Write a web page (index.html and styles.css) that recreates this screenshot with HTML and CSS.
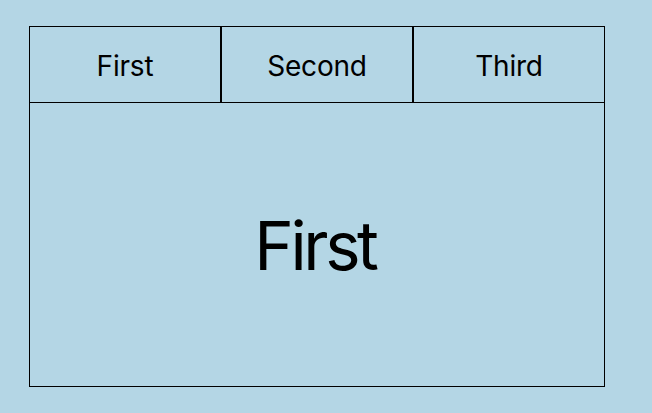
FILE: index.html
```html
<!DOCTYPE html>
<html lang="en">
<head>
  <meta charset="UTF-8">
  <title>Tabs</title>
  <link rel="stylesheet" href="styles.css">
</head>
<body>

  <!-- Tab bar and panel -->
  <div class="tabs">
    <div class="tab-bar">
      <div class="tab">First</div>
      <div class="tab">Second</div>
      <div class="tab">Third</div>
    </div>
    <div class="panel">First</div>
  </div>

</body>
</html>
```
FILE: styles.css
```css
body {
  margin: 0;
  padding: 26px 0 0 29px;
  font-family: Inter, 'Noto Sans', Arial, sans-serif;
  background-color: #b4d6e5;
  color: #000;
}

.tabs {
  width: 576px;
}

.tab-bar {
  display: flex;
}

.tab {
  flex: 1;
  height: 73px;
  padding-top: 2px;
  border: 1px solid #000;
  display: flex;
  align-items: center;
  justify-content: center;
  font-size: 28px;
  letter-spacing: -0.2px;
}

.panel {
  height: 281px;
  padding: 2px 4px 0 0;
  border: 1px solid #000;
  border-top: none;
  display: flex;
  align-items: center;
  justify-content: center;
  font-size: 67px;
  letter-spacing: -3.4px;
}
```
